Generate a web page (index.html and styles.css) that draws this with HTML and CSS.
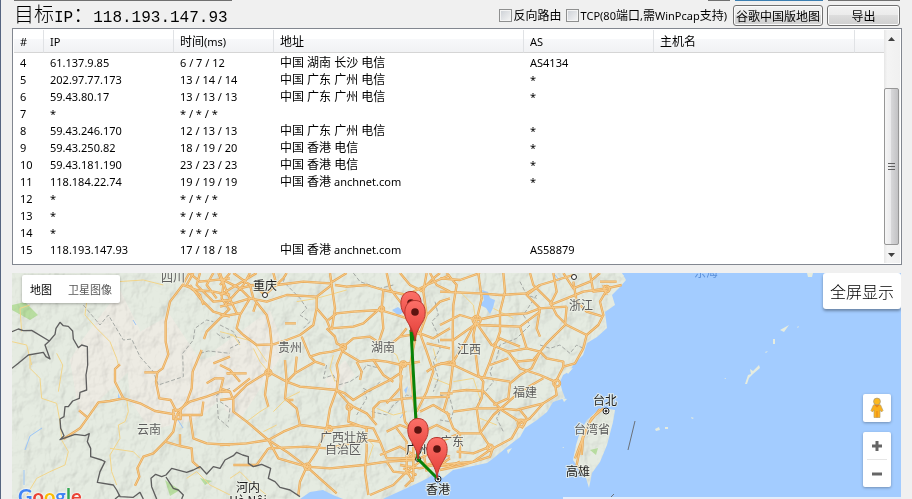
FILE: index.html
```html
<!DOCTYPE html>
<html lang="zh">

<head>
    <meta charset="utf-8">
    <title>路由追踪</title>
    <link rel="stylesheet" href="styles.css">
</head>

<body>
    <div class="window">
        <div class="tabs">
            <i class="field"></i>
            <i class="btn_s"></i>
            <i class="btn_m on"></i>
            <i class="btn_l"></i>
        </div>
        <div class="toolbar">
            <h1>目标<span>IP</span>：<span>118.193.147.93</span></h1>
            <label><input type="checkbox">反向路由</label>
            <label><input type="checkbox"><span><small>TCP(80</small>端口<small>,</small>需<small>WinPcap</small>支持<small>)</small></span></label>
            <button class="btn wide" type="button">谷歌中国版地图</button>
            <button class="btn" type="button">导出</button>
        </div>

        <div class="list">
            <table>
                <colgroup>
                    <col class="c_num"><col class="c_ip"><col class="c_time"><col class="c_addr"><col class="c_as"><col class="c_host"><col>
                </colgroup>
                <thead>
                    <tr><th>#</th><th>IP</th><th><b>时间</b>(ms)</th><th><b>地址</b></th><th>AS</th><th><b>主机名</b></th><th></th></tr>
                </thead>
                <tbody>
                    <tr><td>4</td><td>61.137.9.85</td><td>6 / 7 / 12</td><td><b>中国 湖南 长沙 电信</b></td><td>AS4134</td><td></td><td></td></tr>
                    <tr><td>5</td><td>202.97.77.173</td><td>13 / 14 / 14</td><td><b>中国 广东 广州 电信</b></td><td>*</td><td></td><td></td></tr>
                    <tr><td>6</td><td>59.43.80.17</td><td>13 / 13 / 13</td><td><b>中国 广东 广州 电信</b></td><td>*</td><td></td><td></td></tr>
                    <tr><td>7</td><td>*</td><td>* / * / *</td><td></td><td></td><td></td><td></td></tr>
                    <tr><td>8</td><td>59.43.246.170</td><td>12 / 13 / 13</td><td><b>中国 广东 广州 电信</b></td><td>*</td><td></td><td></td></tr>
                    <tr><td>9</td><td>59.43.250.82</td><td>18 / 19 / 20</td><td><b>中国 香港 电信</b></td><td>*</td><td></td><td></td></tr>
                    <tr><td>10</td><td>59.43.181.190</td><td>23 / 23 / 23</td><td><b>中国 香港 电信</b></td><td>*</td><td></td><td></td></tr>
                    <tr><td>11</td><td>118.184.22.74</td><td>19 / 19 / 19</td><td><b>中国 香港</b> anchnet.com</td><td>*</td><td></td><td></td></tr>
                    <tr><td>12</td><td>*</td><td>* / * / *</td><td></td><td></td><td></td><td></td></tr>
                    <tr><td>13</td><td>*</td><td>* / * / *</td><td></td><td></td><td></td><td></td></tr>
                    <tr><td>14</td><td>*</td><td>* / * / *</td><td></td><td></td><td></td><td></td></tr>
                    <tr><td>15</td><td>118.193.147.93</td><td>17 / 18 / 18</td><td><b>中国 香港</b> anchnet.com</td><td>AS58879</td><td></td><td></td></tr>
                </tbody>
            </table>
            <div class="scrollbar">
                <svg class="arrow" viewBox="0 0 16 17"><path d="M4 11h7L7.500 7z"/></svg>
                <div class="track"><div class="thumb"><i></i><i></i><i></i></div></div>
                <svg class="arrow" viewBox="0 0 16 17"><path d="M4 7h7L7.500 11z"/></svg>
            </div>
        </div>

        <div class="map">
            <svg class="canvas" viewBox="12 273 889 226" preserveAspectRatio="xMinYMin slice">
                <defs>
                    <filter id="relief" x="0" y="0" width="100%" height="100%">
                        <feTurbulence type="fractalNoise" baseFrequency="0.07 0.05" numOctaves="4" seed="8" result="n"/>
                        <feDiffuseLighting in="n" surfaceScale="4" diffuseConstant="1.1" lighting-color="#fff" result="l"><feDistantLight azimuth="225" elevation="60"/></feDiffuseLighting>
                        <feComposite in="l" in2="SourceAlpha" operator="in"/>
                    </filter>
                    <linearGradient id="red" x1="0" y1="0" x2="0" y2="1"><stop offset="0" stop-color="#fc7068"/><stop offset="1" stop-color="#e23c36"/></linearGradient>
                    <g id="pin">
                        <path d="M0 0C-1-9-4-13-8-20C-12-27-11-40.500 0-40.500S12-27 8-20C4-13 1-9 0 0z" fill="url(#red)" stroke="#b8342c"/>
                        <circle cy="-29" r="3.800" fill="#5c1410"/>
                    </g>
                    <!-- 高速公路，每块图 3 倍坐标 -->
                    <g id="roads">
                        <g transform="translate(0 265) scale(.33333)">
                            <path d="M568 24L548 60L510 110L497 170V230L505 268L488 310L472 322H433M472 322L468 350L478 400L512 405L530 440M360 298L345 312V350L370 400M190 522L240 490L263 458L295 412L330 408L370 400L420 415L465 438L525 448M237 436L263 458M530 450L560 412L575 370L578 320L605 255M612 222L620 200L660 160L690 130M530 440L570 410L620 395L660 380H690M530 450H605L610 410M530 450L520 500L495 530L460 565L430 575L412 610L418 635L405 662M495 530L540 543L575 550L578 590L600 610M570 450L580 520L620 535L690 540M540 508V543"/>
                            <path d="M548 60L590 75L640 80L690 90M570 60L600 100L640 140L690 155M600 24L590 60L640 110L690 105M640 24L620 60L650 100M568 24L600 50L690 40M580 24L560 60L600 90L610 120M655 24L670 60L665 100L685 130M640 295L690 275M620 355L645 340H670L660 380M680 325H690"/>
                            <path d="M520 435H542V462H520z"/>
                        </g>
                        <g transform="translate(220 265) scale(.33333)">
                            <path d="M0 40L60 70L90 100L140 110L200 90L290 95M0 90L50 60L110 24M0 125L40 115L90 100L60 150L50 190L70 210L110 240L160 238M40 24L90 60L100 100L140 150L150 190L155 240L145 320M0 155L60 145M160 24L170 60L250 50L330 55L380 24M330 24L335 60L290 95V130L280 180L240 210L200 225L160 238M0 60L30 24M0 24L20 80L50 145M60 70L100 60L135 90L190 40L200 24M15 120L70 60L90 24M110 110L100 140"/>
                            <path d="M290 130L320 165L330 190L400 185L430 175L480 130M325 165L350 145L400 140L480 135M320 190L345 215L350 235L370 245L400 220L450 215L480 235M345 60L380 65L440 60L490 75L485 130L490 190L475 235M370 250L350 300L355 330L350 375L330 430L320 490M370 250L335 260L300 265L270 275L245 215M285 290L225 325L200 350M270 275L285 290L315 300M335 195L345 130L335 60M370 260L420 290L460 285L500 290L545 300L600 290"/>
                            <path d="M0 405L40 400L80 360L145 320L200 350L240 365L350 375L390 420L440 445L470 480M20 325H80M60 350L30 315L0 300M0 370L30 380L40 405V440L80 470L145 525L200 560L260 605M145 320L140 350L135 390L145 425M40 380L90 340M195 285L200 350L195 400L230 430L240 480M230 275L225 325M197 405H220M195 175H228"/>
                            <path d="M240 480L320 490L400 480L460 490L480 530L500 580L580 580M0 540L80 535L145 525L190 500L240 480M145 525L175 580L260 605L290 560L320 490M260 605L330 610L430 600L500 590L580 585M145 550L260 545L320 550L440 525L480 530M260 605L240 650L235 690M260 605L310 650L350 685M440 490V560L435 620L445 690M390 420L385 470L440 490M350 375L375 385L400 405L440 380L510 345L540 325L550 300M460 285L490 330L520 350M410 290L425 320L420 345M480 410L560 400L690 395M480 410L460 430V460M40 600H110L145 550"/>
                            <path d="M500 24L510 70L540 110L575 130L590 200L570 300L580 400L590 460L600 550M490 75L560 90L620 60L690 30M480 135L530 150L560 160L600 205M540 215L600 205L640 220L690 190M620 24L610 80L620 150L600 205L620 260L640 320L620 380L590 440M620 235L690 250M620 320L650 300L690 290M540 300L545 400L555 470L580 500M510 240L540 215L560 190M540 295H570M500 415L540 370L545 330M630 24L650 60L690 80M600 80L640 40L660 24M620 150L660 110L690 100M540 24L570 60L610 80M600 440L640 420L690 450M610 500L650 480L690 500"/>
                            <path d="M500 500L540 480L590 500M530 490L560 530L560 560M480 570L540 545L600 580L640 560L690 575M540 600L600 610L640 600L690 605M580 540V640L555 665M600 590L560 620L520 660L450 690M610 560L620 620M560 560V620L580 650M545 580H600M565 570L620 600L650 590M550 610L590 630M640 560L660 600L690 580M500 590L520 620L570 625"/>
                            <circle cx="145" cy="323" r="9"/><circle cx="262" cy="605" r="9"/><circle cx="485" cy="132" r="7"/><circle cx="388" cy="426" r="8"/><circle cx="370" cy="246" r="8"/><circle cx="550" cy="297" r="8"/><circle cx="327" cy="492" r="9"/>
                        </g>
                        <g transform="translate(440 265) scale(.33333)">
                            <path d="M0 40L60 45L120 24M0 80L120 85L180 90L260 85L300 60M20 24L50 60L40 120L38 200L40 290L30 370L10 440M115 24L125 100L110 165L100 210L115 330L130 350L125 400L110 430M0 180L60 150L110 165L180 150L260 145L300 130L380 125M190 24L195 80L180 140V200L150 290L130 340M110 180L240 185L300 140M0 225H40L110 175L155 240L205 260L240 310L300 330L345 350M40 290L70 240L110 165"/>
                            <path d="M300 60L260 90L300 130L290 190L300 215M270 24L280 60L330 110L350 150L380 180M340 24L350 80L330 120M400 50L410 110L440 140L490 155M300 60L400 30M330 120L380 100L430 80L500 70L545 60M370 24L400 70L450 50L480 24M450 24L460 80L500 75L480 110L490 150L475 180L440 210L430 250L405 295L370 305L345 355L350 390L310 415L270 460L240 475L215 520L150 555L100 590L0 600M480 50L530 50M500 90L490 60M380 125L375 180L320 235L300 260L260 250L240 185M380 180L440 210M300 260L320 280L370 290V305M300 260L275 310L240 330L210 355L205 400L160 420"/>
                            <path d="M0 295L40 300L115 335L210 350M38 380L80 375L130 378L150 400L185 435L240 470M205 260L260 250M205 280L150 300M0 385H38M40 440L110 430L180 430L230 435L310 415M110 430L120 500L150 545M0 530L60 505H120L160 450L240 380L310 340M50 560L100 565L150 545M20 440L40 490L60 505M230 290L280 285L300 260M240 435L260 460M225 465H260L245 490M0 615L70 600L150 575L160 545M0 585L30 605L60 590M160 240L180 220L240 245M60 580L60 505"/>
                            <path d="M490 430L455 460L430 510L418 560L410 600L425 620M480 432L450 470L420 540L405 580M430 510L425 570"/>
                            <circle cx="110" cy="165" r="12"/><circle cx="350" cy="355" r="10"/><circle cx="243" cy="475" r="10"/><circle cx="500" cy="72" r="9"/><circle cx="150" cy="548" r="9"/><circle cx="38" cy="295" r="6"/>
                        </g>
                    </g>
                    <path id="land" d="M12 273H622L626 280L620 287L612 295L615 305L605 312L607 328L597 337L587 343L583 355L573 365L570 371L563 375L560 382L562 390L565 398L553 402L547 412L537 420L525 428L520 437L507 447L495 457L487 463L468 467L453 470L443 478L435 473L428 478L420 482L407 488L387 497L383 499H343L333 495L323 490L310 492L300 499H12z"/>
                    <path id="taiwan" d="M596 412L603 408L615 410L613 422L607 445L600 462L592 473L589 488L586 478L580 470L573 460L576 445L580 432L587 420z"/>
                </defs>

                <path d="M12 273H901V499H12z" fill="#a3ccff"/>
                <use href="#land" fill="#e5ebe1"/>
                <use href="#taiwan" fill="#e5ebe1"/>
                <path d="M125 340L170 315L200 360L235 350L220 400L195 420L150 430L130 400zM70 360L82 340L120 290L140 330L130 370L100 400L80 420zM215 350L270 310L285 350L240 420L225 410zM325 380L345 360L355 375L335 395z" fill="#f1ebe4" opacity=".7"/>
                <path d="M12 305L25 302L38 315L30 320L12 310zM165 480L180 490L170 496zM200 478L212 481L205 485zM590 450L598 448L596 455z" fill="#b8dda0"/>
                <g class="shade"><use href="#land" filter="url(#relief)"/><use href="#taiwan" filter="url(#relief)"/></g>
                <g class="water">
                    <path d="M25 450L30 436L42 428M24 470V485M133 320L136 325M178 420L183 428M393 310L400 314L405 308M400 418L405 412M555 275L560 281"/>
                    <path class="lake" d="M482 290L484 300L480 305L486 308L490 314L493 308L495 300L490 298L488 292zM392 310L398 307L404 312L398 315zM404 390L408 386L406 394zM118 393L121 400L118 398zM425 480L440 473L438 490L425 485z"/>
                </g>
                <g class="isle">
                    <path d="M620 276L624 275L622 278zM565 370L573 368L568 374zM562 398L567 399L564 402zM507 450L512 448L508 454zM655 429L659 427L660 430L656 431zM665 427H668V429H665zM780 330L789 325L784 332zM773 339L775 339V344L773 344zM765 352L768 351L766 353zM745 384L748 375L751 374L750 369L753 371L759 365L760 368L753 374L749 378L747 384zM691 417L694 418L692 419zM724 378H726V379zM807 273H813L812 277L808 277zM797 327L799 326L798 328zM562 447H564V448zM606 485L607 486z"/>
                </g>
                <g class="minor">
                    <g transform="translate(0 265) scale(.33333)">
                        <path d="M260 110L255 150L290 190L330 230L350 280L355 300M90 270V310L120 340L125 400L170 415L180 470L185 520M170 265L188 300L180 350L175 380M185 525L205 560L195 600L150 620L110 640L80 690M380 400L385 440L375 470L355 480L360 520L330 570L335 620L350 660M65 200L60 130L90 120M36 230L80 240L95 300M355 50L430 45L490 60M330 550L400 560L420 580M560 640L590 620L630 660L690 690"/>
                        <path d="M690 210L760 230L800 290M690 640L720 620L750 650L800 690"/>
                    </g>
                    <g transform="translate(220 265) scale(.33333)">
                        <path d="M0 200L40 210L60 240M230 110L290 100L380 75M160 440L200 400L240 380M80 470L120 440L145 425M500 250L530 270L540 300M420 500L460 540L440 600M640 250L650 290M470 430L520 450L560 440M130 500L170 480M640 340L690 360M100 250L120 290L145 320M340 270L330 310L345 350"/>
                        <path d="M720 80L760 120L770 180M700 350L760 340L780 400M840 250L900 290M820 130L880 160M780 460L830 480"/>
                    </g>
                </g>
                <g class="province">
                    <g transform="translate(0 265) scale(.33333)">
                        <path d="M250 120L300 180L325 150L370 225L395 222L420 275L460 320L475 360L550 335L548 265L580 225L585 190L620 165L640 170M600 265L625 258L690 265M650 205L670 220L690 215M690 370L650 390L655 460L690 490"/>
                    </g>
                    <g transform="translate(220 265) scale(.33333)">
                        <path d="M0 180L40 200L60 235L30 250M200 24L190 50L240 100L260 130L240 150L270 170L250 190M400 24L420 50L480 70L520 60M320 300L310 340L340 330L355 360L390 350L420 330L440 300L480 310M480 350L450 380L430 370L440 400L410 450M455 440L500 450L520 420L560 390L600 400M0 410L30 430L25 470M645 110L655 150L635 170L650 200L660 250L640 290L655 340L640 380"/>
                    </g>
                    <g transform="translate(440 265) scale(.33333)">
                        <path d="M290 90L250 150L270 180L230 220L180 240L170 280L150 320L160 350L120 400L110 430M180 440L170 460L190 500M300 240L330 250L360 240L390 265L410 240L430 250M0 390L30 400L40 440L30 470L0 465M240 50L260 90L290 100"/>
                    </g>
                </g>
                <g class="road_case"><use href="#roads"/></g>
                <g class="road"><use href="#roads"/></g>
                <g class="border" transform="translate(0 265) scale(.33333)">
                    <path d="M36 200L55 192L70 197L95 196L148 228L165 208L168 190L180 172L190 182L205 184L218 198L220 222L235 248L245 240L262 245L263 300L258 330L260 375L240 382L238 400L218 408L205 425H195L192 455L180 462L182 490L192 512L180 524L225 508L255 512L268 506L262 530L272 550V575L305 585L315 590L300 620L292 652L340 660L350 675L360 695L400 697L420 682L430 702M36 310L55 295L85 270L130 262L138 275L150 282L135 240L148 228"/>
                    <path d="M470 702L455 665L453 640L467 628L485 635L498 630L515 610L560 622L580 615L600 605L620 627L640 605L660 610L675 585L700 572L710 562L728 570L745 575V595L760 605L785 598L812 610L805 640L825 650L840 667L870 675L900 695M498 636L520 670L535 675L550 690L545 702M345 702L360 690"/>
                </g>
                <path class="dash9" d="M635 421L628 450M614 494L609 499"/>

                <g class="city">
                    <circle cx="265" cy="295" r="2.500"/><circle cx="574" cy="277" r="2.500"/><circle cx="418" cy="459" r="2.500"/>
                    <circle cx="606" cy="411" r="3"/><circle cx="438" cy="479" r="3"/>
                    <circle class="dot" cx="606" cy="411" r="1"/><circle class="dot" cx="438" cy="479" r="1"/>
                </g>
                <g class="label">
                    <text x="173" y="282">四川</text>
                    <text x="290" y="352">贵州</text>
                    <text x="383" y="352">湖南</text>
                    <text x="469" y="354">江西</text>
                    <text x="581" y="310">浙江</text>
                    <text x="525" y="397">福建</text>
                    <text x="149" y="434">云南</text>
                    <text x="344" y="442">广西壮族</text>
                    <text x="343" y="454">自治区</text>
                    <text x="452" y="446">广东</text>
                    <text x="592" y="434">台湾省</text>
                    <text class="sea" x="706" y="277">东海</text>
                </g>
                <g class="label big">
                    <text x="265" y="290">重庆</text>
                    <text x="418" y="454">广州</text>
                    <text x="438" y="494">香港</text>
                    <text x="605" y="405">台北</text>
                    <text x="578" y="476">高雄</text>
                    <text x="248" y="492">河内</text>
                    <text x="248" y="505">Hà Nội</text>
                </g>

                <path class="route" d="M415 341L411 330L418 459L437 478"/>
                <use href="#pin" x="411" y="332"/>
                <use href="#pin" x="415" y="341"/>
                <use href="#pin" x="418" y="459"/>
                <use href="#pin" x="437" y="478"/>
            </svg>

            <div class="map_type">
                <button class="on" type="button">地图</button>
                <button type="button">卫星图像</button>
            </div>
            <button class="fullscreen" type="button">全屏显示</button>
            <div class="map_tools">
                <button class="pegman" type="button" aria-label="街景">
                    <svg width="14" height="22" viewBox="0 0 14 22">
                        <path d="M3 9Q3 7.500 5 7.500H9Q11 7.500 11 9L13 13.500L11.500 15L10 13V20.500H4V13L2.500 15L1 13.500z" fill="#fbb01c" stroke="#b8a06a" stroke-width=".7"/>
                        <path d="M4.500 8H9.500L7 10.500zM6.500 14H7.500V20.500H6.500z" fill="#e58316"/>
                        <circle cx="7" cy="4.500" r="3.400" fill="#fcb91e" stroke="#a89a78" stroke-width=".8"/>
                    </svg>
                </button>
                <div class="zoom">
                    <button type="button" aria-label="放大"><svg width="12" height="12" viewBox="0 0 12 12"><path d="M6 1V11M1 6H11"/></svg></button>
                    <button type="button" aria-label="缩小"><svg width="12" height="12" viewBox="0 0 12 12"><path d="M1 6H11"/></svg></button>
                </div>
            </div>
            <a class="google" href="#"><span class="b">G</span><span class="r">o</span><span class="y">o</span><span class="b">g</span><span class="g">l</span><span class="r">e</span></a>
            <div class="credits"></div>
        </div>
    </div>
</body>

</html>
```
FILE: styles.css
```css
* {
    box-sizing: border-box;
}

body {
    margin: 0;
    background: #f0f0f0;
    color: #000;
    font: 11px/17px "Noto Sans", "Noto Sans CJK SC", sans-serif;
    overflow: hidden;
}

button {
    font-family: "Noto Sans CJK SC", sans-serif;
    padding: 0;
    border: 0;
    background: none;
    color: #000;
}

.window {
    display: flex;
    flex-direction: column;
    height: 100vh;
    padding: 0 10px 0 11px;
    border-left: 1px solid #566581;
}

/* 上一行控件的底边 */
.tabs {
    display: flex;
    height: 1px;
    gap: 5px;
    padding: 0 2px;
    flex: none;
}

.tabs i {
    background: #707070;
}

.tabs .field {
    width: 218px;
    margin-right: auto;
}

.tabs .btn_s {
    width: 22px;
}

.tabs .btn_m {
    width: 88px;
}

.tabs .btn_l {
    width: 72px;
}

.tabs .on {
    background: #3c7fb1;
}

.toolbar {
    display: flex;
    align-items: center;
    flex: none;
    height: 27px;
    gap: 4px;
    padding: 2px 2px 0;
}

.toolbar h1 {
    margin: 0 auto 0 0;
    font: 300 20px/24px "Noto Sans CJK SC", sans-serif;
    white-space: nowrap;
}

.toolbar h1 span {
    font: 16px/24px "Liberation Mono", monospace;
}

.toolbar label {
    display: flex;
    align-items: center;
    gap: 2px;
    font-size: 12px;
    white-space: nowrap;
}

.toolbar label small {
    font-size: 11px;
}

.toolbar input {
    appearance: none;
    width: 13px;
    height: 13px;
    margin: 0;
    border: 1px solid #8e8f8f;
    background: linear-gradient(135deg, #cbcfd5, #f6f6f6);
    box-shadow: inset 0 0 0 1px #f4f4f4;
}

.btn {
    width: 73px;
    height: 21px;
    border: 1px solid #707070;
    border-radius: 3px;
    background: linear-gradient(#f2f2f2, #ebebeb 50%, #dddddd 50%, #cfcfcf);
    box-shadow: inset 0 0 0 1px #fcfcfc;
    font-size: 12px;
    line-height: 17px;
    white-space: nowrap;
}

.btn.wide {
    width: 90px;
    margin-left: 2px;
}

/* 路由列表 */
.list {
    display: flex;
    flex: none;
    height: 237px;
    padding: 1px;
    border: 1px solid #828790;
    background: #fff;
}

table {
    flex: 1;
    align-self: flex-start;
    width: 0;
    table-layout: fixed;
    border-collapse: separate;
    border-spacing: 0;
}

.c_num {
    width: 30px;
}

.c_ip,
.c_as {
    width: 130px;
}

.c_time {
    width: 100px;
}

.c_addr {
    width: 250px;
}

.c_host {
    width: 201px;
}

th,
td {
    padding: 0 0 0 6px;
    font-weight: normal;
    text-align: left;
    white-space: nowrap;
}

th {
    height: 23px;
    border-right: 1px solid #e0e2e5;
    border-bottom: 1px solid #d5d5d5;
    background: linear-gradient(#fff 40%, #f7f8fa 41%, #f1f2f4);
}

th:last-child {
    border-right: 0;
}

td {
    height: 17px;
    line-height: 17px;
}

tbody::before {
    content: "";
    display: block;
    height: 1px;
}

th b,
td b {
    font-size: 12px;
    font-weight: normal;
    line-height: 16px;
}

.scrollbar {
    display: flex;
    flex-direction: column;
    width: 16px;
    background: linear-gradient(90deg, #e6e6e6, #f4f4f4 20%, #f0f0f0);
}

.arrow {
    width: 16px;
    height: 17px;
    fill: #404040;
}

.track {
    display: flex;
    flex: 1;
    padding: 41px 0 1px;
}

.thumb {
    display: flex;
    flex-direction: column;
    align-items: center;
    justify-content: center;
    gap: 2px;
    width: 15px;
    border: 1px solid #969696;
    border-radius: 2px;
    background: linear-gradient(90deg, #f5f5f5, #e9e9eb 48%, #d6d6d8 50%, #c2c2c4);
}

.thumb i {
    width: 7px;
    height: 1px;
    background: #606060;
}

/* 地图 */
.map {
    position: relative;
    flex: 1;
    min-height: 0;
    margin: 8px 1px 0 0;
    overflow: hidden;
    background: #a3ccff;
}

.canvas {
    display: block;
    width: 100%;
    height: 100%;
}

.shade {
    mix-blend-mode: multiply;
    opacity: .3;
}

.road,
.road_case,
.minor,
.province,
.border,
.water,
.dash9 {
    fill: none;
    stroke-linejoin: round;
}

.road_case {
    stroke: #e6a95a;
    stroke-width: 7px;
}

.road {
    stroke: #f8cb8a;
    stroke-width: 3px;
}

.minor {
    stroke: #f2d58a;
    stroke-width: 3px;
}

.province {
    stroke: #a5a9a5;
    stroke-width: 3px;
    stroke-dasharray: 12 6;
}

.border {
    stroke: #5e5e5e;
    stroke-width: 4px;
}

.dash9 {
    stroke: #6a7078;
}

.water {
    stroke: #9cc6f8;
}

.water .lake {
    fill: #a3ccff;
    stroke: none;
}

.isle {
    fill: #e6ecdf;
}

.city {
    fill: #fff;
    stroke: #222;
}

.city .dot {
    fill: #222;
}

.label {
    font: 12px "Noto Sans CJK SC", sans-serif;
    text-anchor: middle;
    fill: #5c5c5c;
    stroke: #eef1e8;
    stroke-width: 2px;
    stroke-opacity: .8;
    paint-order: stroke;
}

.label.big {
    fill: #1c1c1c;
}

.label .sea {
    fill: #5a8fd8;
    stroke: none;
}

.route {
    fill: none;
    stroke: #088208;
    stroke-width: 3px;
}

.map_type {
    position: absolute;
    top: 2px;
    left: 10px;
    display: flex;
    height: 28px;
    border-radius: 2px;
    background: #fff;
    box-shadow: 0 1px 3px rgba(0, 0, 0, .3);
}

.map_type button {
    padding: 0 8px;
    font-size: 11px;
    color: #565656;
}

.map_type .on {
    color: #000;
}

.fullscreen {
    position: absolute;
    top: 0;
    right: 0;
    width: 78px;
    height: 36px;
    border-radius: 3px;
    background: #fff;
    box-shadow: 0 2px 3px rgba(0, 0, 0, .35);
    font-size: 16px;
    font-weight: 300;
}

.map_tools {
    position: absolute;
    right: 10px;
    bottom: 12px;
    display: flex;
    flex-direction: column;
    gap: 10px;
    width: 28px;
}

.pegman,
.zoom {
    display: flex;
    border-radius: 2px;
    background: #fff;
    box-shadow: 0 1px 3px rgba(0, 0, 0, .3);
}

.pegman {
    align-items: center;
    justify-content: center;
    height: 28px;
}

.zoom {
    flex-direction: column;
    padding: 0 4px;
}

.zoom button {
    display: flex;
    align-items: center;
    justify-content: center;
    height: 27px;
}

.zoom button + button {
    height: 28px;
    border-top: 1px solid #e6e6e6;
}

.zoom path {
    fill: none;
    stroke: #666;
    stroke-width: 3px;
}

.google {
    position: absolute;
    bottom: -11px;
    left: 6px;
    font: bold 20px/28px Lato, sans-serif;
    text-decoration: none;
    text-shadow: 0 0 2px #fff, 0 0 2px #fff;
}

.google .b {
    color: #4285f4;
}

.google .r {
    color: #ea4335;
}

.google .y {
    color: #fbbc05;
}

.google .g {
    color: #34a853;
}

.credits {
    position: absolute;
    right: 0;
    bottom: 0;
    width: 338px;
    height: 2px;
    background: #e3edfa;
}
```
